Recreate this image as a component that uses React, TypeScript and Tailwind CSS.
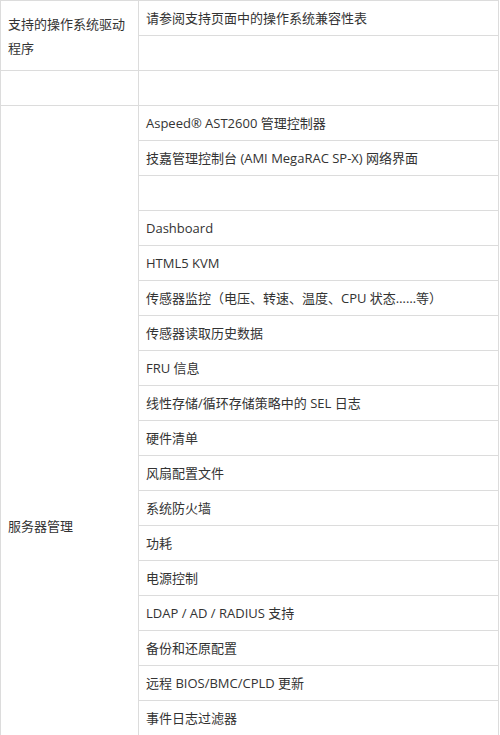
import React from 'react';

const rightRows: string[] = [
  'Aspeed® AST2600 管理控制器',
  '技嘉管理控制台 (AMI MegaRAC SP-X) 网络界面',
  '',
  'Dashboard',
  'HTML5 KVM',
  '传感器监控（电压、转速、温度、CPU 状态……等）',
  '传感器读取历史数据',
  'FRU 信息',
  '线性存储/循环存储策略中的 SEL 日志',
  '硬件清单',
  '风扇配置文件',
  '系统防火墙',
  '功耗',
  '电源控制',
  'LDAP / AD / RADIUS 支持',
  '备份和还原配置',
  '远程 BIOS/BMC/CPLD 更新',
  '事件日志过滤器',
  '',
  '',
  '',
  '',
  '',
  '',
];

const cell = 'border border-[#dcdcdc] px-[7px] align-middle';

export default function App() {
  return (
    <div
      className="h-[735px] w-[500px] overflow-hidden bg-white text-[13px] leading-[24px] text-[#333]"
      style={{ fontFamily: '"Open Sans", "Noto Sans CJK SC", sans-serif' }}
    >
      <table className="w-[499px] table-fixed border-collapse">
        <colgroup>
          <col className="w-[138px]" />
          <col />
        </colgroup>
        <tbody>
          <tr className="h-[35px]">
            <td rowSpan={2} className={cell}>
              支持的操作系统驱动程序
            </td>
            <td className={cell}>请参阅支持页面中的操作系统兼容性表</td>
          </tr>
          <tr className="h-[35px]">
            <td className={cell}></td>
          </tr>
          <tr className="h-[35px]">
            <td className={cell}></td>
            <td className={cell}></td>
          </tr>
          {rightRows.map((text, i) => (
            <tr key={i} className="h-[35px]">
              {i === 0 && (
                <td rowSpan={rightRows.length} className={cell}>
                  服务器管理
                </td>
              )}
              <td className={cell}>{text}</td>
            </tr>
          ))}
        </tbody>
      </table>
    </div>
  );
}
